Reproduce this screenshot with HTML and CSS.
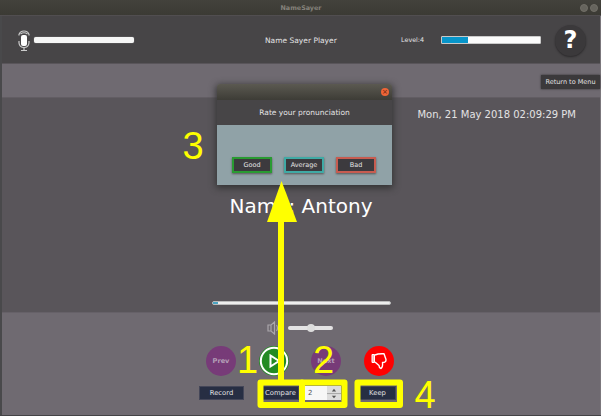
FILE: index.html
```
<!DOCTYPE html>
<html lang="en">
<head>
<meta charset="utf-8">
<title>NameSayer</title>
<link rel="stylesheet" href="styles.css">
</head>
<body>
<div class="window">
  <div class="titlebar"><span></span><span class="app-name">NameSayer</span><span class="win-buttons"><i></i><i></i></span></div>
  <header class="header">
    <svg class="mic" viewBox="0 0 12 22"><rect x="3" y="5" width="6" height="11" rx="2" fill="#fff"/><path d="M1 5.5V4.5Q2 1 6 1T11 4.500V5.500M2.500 4Q6 1.500 9.500 4M1 11V13Q1.500 17.500 6 17.500T11 13V11M6 17V20M3 20.500H9" fill="none" stroke="#ccc" stroke-width="1.2"/></svg>
    <div class="mic-level"></div>
    <h1 class="title">Name Sayer Player</h1>
    <span class="level">Level:4</span>
    <div class="level-bar"><div class="level-fill"></div></div>
    <button class="help">?</button>
  </header>
  <nav class="menu-band"><button class="return">Return to Menu</button></nav>
  <main class="stage">
    <time class="date">Mon, 21 May 2018 02:09:29 PM</time>
    <h2 class="name">Name: Antony</h2>
    <div class="progress"><div class="progress-fill"></div></div>
  </main>
  <footer class="controls">
    <div class="volume">
      <svg class="speaker" viewBox="0 0 14 14"><path d="M2 4H5L8.500 1V13L5 10H2ZM5 4V10M10.500 4Q12.500 7 10.500 10" fill="none" stroke="#aaa6ab" stroke-width="1.2"/></svg>
      <div class="slider"><div class="thumb"></div></div>
    </div>
    <div class="rounds">
      <button class="round">Prev</button>
      <button class="round play"><svg viewBox="0 0 30 30"><circle cx="15" cy="15" r="13.200" fill="#238b23" stroke="#fff" stroke-width="2"/><path d="M11.500 9.500V20.500L20 15Z" fill="none" stroke="#fff" stroke-width="2"/></svg></button>
      <button class="round">Next</button>
      <button class="round down"><svg viewBox="0 0 30 30"><path d="M8 8.500H10.500V16.500H8Z" fill="#fbb" stroke="#fff"/><path d="M11 9Q14 7.500 20 7.800L22 13.500Q22.300 16.500 18.500 16.500Q19 21 17 22.500Q15 22 15 19.500L11 16" fill="none" stroke="#fff" stroke-width="1.400" stroke-linejoin="round"/></svg></button>
    </div>
    <div class="actions">
      <button class="act record">Record</button>
      <button class="act compare">Compare</button>
      <div class="spinner"><span>2</span><div class="steps"><svg viewBox="0 0 13 14"><path d="M0 7H13" stroke="#aaa"/><path d="M4.500 5L6.500 2.500L8.500 5ZM4.500 9L6.500 11.500L8.500 9Z" fill="#555"/></svg></div></div>
      <button class="act keep">Keep</button>
    </div>
  </footer>
</div>
<section class="dialog">
  <div class="dialog-bar"><span class="close">×</span></div>
  <div class="dialog-title">Rate your pronunciation</div>
  <div class="dialog-body">
    <button class="rate good">Good</button>
    <button class="rate average">Average</button>
    <button class="rate bad">Bad</button>
  </div>
</section>
<svg class="notes" viewBox="0 0 601 416">
  <g fill="none" stroke="#ff0" stroke-width="6" stroke-linejoin="round">
    <rect x="260.500" y="382.500" width="41.500" height="22.500"/>
    <rect x="302" y="382.500" width="42.500" height="22.500"/>
    <rect x="357.500" y="382.500" width="42.500" height="22.500"/>
    <path d="M281 382V218"/>
  </g>
  <path d="M281.500 181L297 222H267Z" fill="#ff0"/>
  <g class="digits" fill="#ff0">
    <text x="237" y="373">1</text>
    <text x="313" y="373">2</text>
    <text x="182.500" y="158.500">3</text>
    <text x="414.500" y="408">4</text>
  </g>
</svg>
</body>
</html>
```
FILE: styles.css
```
* { box-sizing: border-box; }
body { margin: 0; width: 601px; height: 416px; overflow: hidden; background: #444346; font-family: "DejaVu Sans", sans-serif; color: #e4e3e4; }
button { font: inherit; color: inherit; border: 0; padding: 0; margin: 0; }
h1, h2 { margin: 0; font-weight: 400; }
svg { display: block; }
.window { height: 415px; border-left: 2px solid #49494b; border-right: 1px solid #7b777c; display: flex; flex-direction: column; }
.titlebar { height: 16px; flex: none; margin: 0 -1px 0 -2px; background: linear-gradient(#43423c, #3b3a34); border-bottom: 1px solid #514e50; display: grid; grid-template-columns: 1fr auto 1fr; align-items: center; padding: 0 3px 0 4px; }
.app-name { font-size: 6.4px; font-weight: 700; color: #85827b; }
.win-buttons { display: flex; gap: 2px; justify-content: flex-end; }
.win-buttons i { width: 8px; height: 8px; border-radius: 50%; background: #66645d; border: 1px solid #716f67; }
.header { height: 48px; flex: none; background: #474547; border-bottom: 1px solid #59555a; display: flex; align-items: center; padding-left: 16px; }
.mic { width: 12px; height: 22px; margin-top: 2px; }
.mic-level { width: 100px; height: 6px; margin-left: 4px; border-radius: 2px; background: #f6f6f6; box-shadow: 0 0 1px #ccc; }
.title { width: 74px; margin-left: 131px; margin-top: 2px; font-size: 7.5px; white-space: nowrap; }
.level { width: 40px; margin-left: 62px; margin-top: 1px; font-size: 6.4px; white-space: nowrap; }
.level-bar { width: 100px; height: 8px; background: #fafafa; border: 1px solid #c9c9c9; border-radius: 1px; }
.level-fill { width: 26px; height: 6px; background: #0795ca; }
.help { width: 31px; height: 31px; margin-left: 14px; margin-top: 1px; border-radius: 50%; background: #3b393b; box-shadow: 0 1px 2px #2b292b; font-size: 24px; font-weight: 700; line-height: 31px; color: #fff; }
.menu-band { height: 34px; flex: none; background: #6f6a71; border-bottom: 1px solid #625d63; display: flex; justify-content: flex-end; padding-top: 11px; }
.return { width: 59px; height: 14px; background: #3b393b; box-shadow: 0 0 2px #2f2d2f; font-size: 6.5px; white-space: nowrap; }
.stage { height: 214px; flex: none; background: #59555a; display: flex; flex-direction: column; align-items: center; padding-top: 10px; }
.date { align-self: flex-end; margin-right: 24px; font-size: 10px; line-height: 14px; white-space: nowrap; }
.name { margin-top: 70px; font-size: 20px; line-height: 28px; color: #fff; }
.progress { width: 179px; height: 4px; margin-top: 81px; margin-left: 1px; background: #eee; border: 1px solid #bbb; border-radius: 2px; }
.progress-fill { width: 5px; height: 2px; background: #4ba4c2; }
.controls { flex: 1; background: #6f6a71; border-top: 1px solid #666168; }
.volume { height: 14px; margin: 8px 0 0 264px; display: flex; align-items: center; gap: 8px; }
.speaker { width: 14px; height: 14px; }
.slider { width: 45px; height: 4px; background: #e4e3e4; border-radius: 2px; display: flex; align-items: center; justify-content: center; }
.thumb { width: 8px; height: 8px; border-radius: 50%; background: #ddd; flex: none; }
.rounds { display: flex; gap: 22.500px; margin: 11px 0 0 204px; }
.round { width: 30px; height: 30px; border-radius: 50%; background: #773b78; color: #b5a0b8; font-size: 6.600px; font-weight: 700; }
.play { background: #238b23; }
.down { background: #f00; }
.actions { display: flex; margin: 10px 0 0 197px; height: 14px; }
.act { height: 14px; background: #272e43; font-size: 6.800px; text-align: center; border: 1px solid #444658; line-height: 11px; }
.record { width: 45px; }
.compare { width: 37px; margin-left: 18px; }
.spinner { width: 36px; margin-left: 6px; background: #f7f7f7; color: #555; font-size: 7px; line-height: 14px; display: flex; justify-content: space-between; padding-left: 3px; }
.steps { width: 14px; background: #ddd; }
.keep { width: 37px; margin-left: 18px; }
.dialog { position: absolute; left: 217px; top: 84px; width: 175px; height: 101px; border-radius: 3px 3px 0 0; box-shadow: 0 2px 7px 1px #333; display: flex; flex-direction: column; }
.dialog-bar { height: 16px; background: linear-gradient(#5b5951, #3d3c36); border-radius: 3px 3px 0 0; display: flex; justify-content: flex-end; align-items: center; padding-right: 3px; }
.close { width: 8px; height: 8px; border-radius: 50%; background: #ef6537; color: #60240f; font-size: 7px; line-height: 8px; text-align: center; }
.dialog-title { height: 25px; background: #474547; font-size: 7.500px; line-height: 26px; text-align: center; }
.dialog-body { flex: 1; background: #90a2a7; display: flex; gap: 12px; padding: 32px 0 0 15px; }
.rate { width: 40px; height: 16px; background: #3c3a3e; border: 2px solid #299b32; font-size: 6.500px; line-height: 11px; box-shadow: 0 1px 2px #555; }
.average { border-color: #40aaa5; }
.bad { border-color: #c75c50; }
.notes { position: absolute; left: 0; top: 0; width: 601px; height: 416px; pointer-events: none; }
.digits { font: 38px "Liberation Sans", sans-serif; }
```
